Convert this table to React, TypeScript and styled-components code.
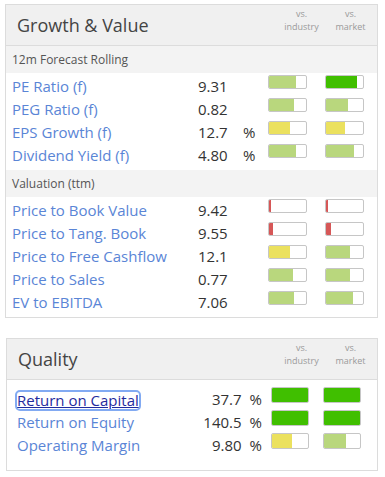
import React from "react";
import styled, { createGlobalStyle } from "styled-components";

const GlobalStyle = createGlobalStyle`
    body {
        margin: 0;
        background: #fff;
        font-family: "Open Sans", "Liberation Sans", sans-serif;
    }
`;

type Tone = "good" | "best" | "mid" | "bad";

const TONES: Record<Tone, string> = {
    good: "#b9d77d",
    best: "#40bf00",
    mid: "#ebe15e",
    bad: "#d65757",
};

const Page = styled.div`
    display: flex;
    flex-direction: column;
    gap: 20px;
    width: 385px;
    padding: 4px 7px 0 5px;
    box-sizing: border-box;
`;

const Panel = styled.section<{ $shift?: number }>`
    border: 1px solid #dcdcdc;
    margin-left: ${(p) => p.$shift ?? 0}px;
    background: #fff;
`;

const Header = styled.div`
    display: flex;
    align-items: flex-start;
    height: 40px;
    background: #f0f0f0;
    border-bottom: 1px solid #dcdcdc;
`;

const Title = styled.h2`
    margin: 0;
    padding-left: 11px;
    font-size: 18px;
    font-weight: 400;
    line-height: 40px;
    color: #444;
`;

const Compare = styled.div`
    display: grid;
    grid-template-columns: 49px 49px;
    margin: 2px 2px 0 auto;
    font-size: 9px;
    line-height: 13px;
    color: #9a9a9a;
    text-align: center;
`;

const SubHeader = styled.div`
    height: 27px;
    padding-left: 6px;
    background: #f3f3f3;
    font-size: 12px;
    line-height: 27px;
    color: #555;
`;

const Rows = styled.div<{ $top?: number; $bottom?: number }>`
    padding: ${(p) => p.$top ?? 0}px 0 ${(p) => p.$bottom ?? 5}px;
`;

const Row = styled.div<{ $cols: string; $indent: number }>`
    display: grid;
    grid-template-columns: ${(p) => p.$cols};
    align-items: start;
    height: 23px;
    padding-left: ${(p) => p.$indent}px;
    font-size: 15px;
    line-height: 27px;
    white-space: nowrap;
`;

const Label = styled.span`
    color: #5a85d6;
`;

const FocusLink = styled.a`
    display: inline-block;
    margin-top: 6px;
    vertical-align: top;
    line-height: 17px;
    color: #1f2b9e;
    text-decoration: underline;
    outline: 2px solid #82aaf2;
    border-radius: 3px;
`;

const Value = styled.span<{ $right?: boolean }>`
    color: #333;
    text-align: ${(p) => (p.$right ? "right" : "left")};
`;

const Unit = styled.span`
    margin-left: 8px;
`;

const Bar = styled.div<{ $h: number; $top: number }>`
    height: ${(p) => p.$h}px;
    margin-top: ${(p) => p.$top}px;
    box-sizing: border-box;
    border: 1px solid #c6c6c6;
    border-radius: 2px;
    background: #fff;
    overflow: hidden;
`;

const Fill = styled.div<{ $tone: Tone }>`
    height: 100%;
    background: ${(p) => TONES[p.$tone]};
`;

type Score = [number, Tone];

interface Metric {
    label: string;
    value: string;
    unit?: string;
    industry: Score;
    market: Score;
}

const forecast: Metric[] = [
    { label: "PE Ratio (f)", value: "9.31", industry: [72, "good"], market: [83, "best"] },
    { label: "PEG Ratio (f)", value: "0.82", industry: [67, "good"], market: [59, "good"] },
    { label: "EPS Growth (f)", value: "12.7", unit: "%", industry: [57, "mid"], market: [50, "mid"] },
    { label: "Dividend Yield (f)", value: "4.80", unit: "%", industry: [72, "good"], market: [77, "good"] },
];

const valuation: Metric[] = [
    { label: "Price to Book Value", value: "9.42", industry: [6, "bad"], market: [6, "bad"] },
    { label: "Price to Tang. Book", value: "9.55", industry: [12, "bad"], market: [14, "bad"] },
    { label: "Price to Free Cashflow", value: "12.1", industry: [57, "mid"], market: [64, "good"] },
    { label: "Price to Sales", value: "0.77", industry: [64, "good"], market: [64, "good"] },
    { label: "EV to EBITDA", value: "7.06", industry: [67, "good"], market: [72, "good"] },
];

const quality: Metric[] = [
    { label: "Return on Capital", value: "37.7", unit: "%", industry: [100, "best"], market: [100, "best"] },
    { label: "Return on Equity", value: "140.5", unit: "%", industry: [100, "best"], market: [100, "best"] },
    { label: "Operating Margin", value: "9.80", unit: "%", industry: [56, "mid"], market: [61, "good"] },
];

const ScoreBar = ({ score, h, top }: { score: Score; h: number; top: number }) => (
    <Bar $h={h} $top={top}>
        <Fill $tone={score[1]} style={{ width: `${score[0]}%` }} />
    </Bar>
);

const PanelHeader = ({ title }: { title: string }) => (
    <Header>
        <Title>{title}</Title>
        <Compare>
            <span>vs.</span>
            <span>vs.</span>
            <span>industry</span>
            <span>market</span>
        </Compare>
    </Header>
);

const GROWTH_COLS = "186px 45px 25px 39px 18px 39px";
const QUALITY_COLS = "180px 65px 9px 38px 14px 38px";

const GrowthRow = ({ m }: { m: Metric }) => (
    <Row $cols={GROWTH_COLS} $indent={6}>
        <Label>{m.label}</Label>
        <Value>{m.value}</Value>
        <Value>{m.unit}</Value>
        <ScoreBar score={m.industry} h={14} top={2} />
        <span />
        <ScoreBar score={m.market} h={14} top={2} />
    </Row>
);

const QualityRow = ({ m, focused }: { m: Metric; focused?: boolean }) => (
    <Row $cols={QUALITY_COLS} $indent={10}>
        <Label>{focused ? <FocusLink href="#">{m.label}</FocusLink> : m.label}</Label>
        <Value $right>
            {m.value}
            <Unit>{m.unit}</Unit>
        </Value>
        <span />
        <ScoreBar score={m.industry} h={16} top={1} />
        <span />
        <ScoreBar score={m.market} h={16} top={1} />
    </Row>
);

export default function App() {
    return (
        <Page>
            <GlobalStyle />
            <Panel>
                <PanelHeader title="Growth & Value" />
                <SubHeader>12m Forecast Rolling</SubHeader>
                <Rows>
                    {forecast.map((m) => (
                        <GrowthRow key={m.label} m={m} />
                    ))}
                </Rows>
                <SubHeader>Valuation (ttm)</SubHeader>
                <Rows>
                    {valuation.map((m) => (
                        <GrowthRow key={m.label} m={m} />
                    ))}
                </Rows>
            </Panel>
            <Panel $shift={1}>
                <PanelHeader title="Quality" />
                <Rows $top={6} $bottom={15}>
                    {quality.map((m, i) => (
                        <QualityRow key={m.label} m={m} focused={i === 0} />
                    ))}
                </Rows>
            </Panel>
        </Page>
    );
}
